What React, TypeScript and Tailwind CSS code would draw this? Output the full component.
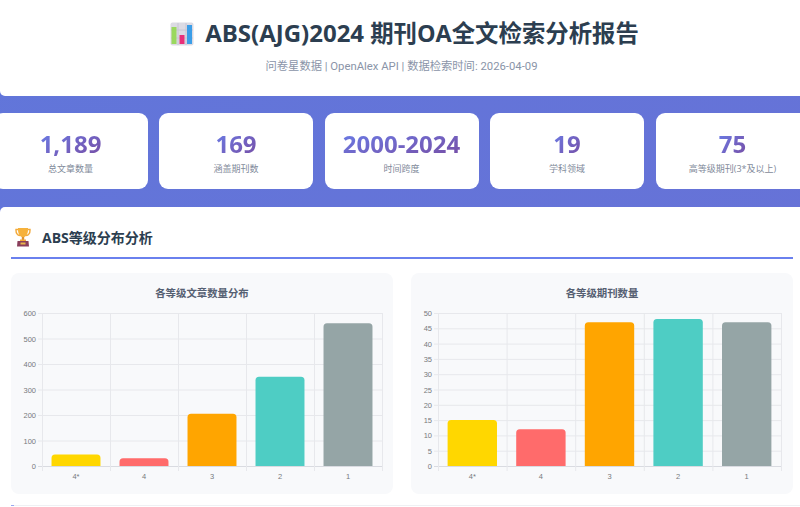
const font = "font-['Open_Sans','Noto_Sans_CJK_SC',sans-serif]";

const stats = [
  { value: '1,189', label: '总文章数量' },
  { value: '169', label: '涵盖期刊数' },
  { value: '2000-2024', label: '时间跨度' },
  { value: '19', label: '学科领域' },
  { value: '75', label: '高等级期刊(3*及以上)' },
];

const labels = ['4*', '4', '3', '2', '1'];
const colors = ['#FFD700', '#FF6B6B', '#FFA500', '#4ECDC4', '#95A5A6'];

function BarsIcon() {
  return (
    <svg width="24" height="24" viewBox="0 0 24 24">
      <rect x="0.5" y="0.5" width="23" height="23" rx="2" fill="#dcdbe4" />
      <path d="M8 1v22M16 1v22M1 8h22M1 16h22" stroke="#c8c6d4" strokeWidth="1" />
      <rect x="1.500" y="5" width="5" height="17" fill="#9ad85f" />
      <rect x="9.500" y="13" width="5" height="9" fill="#e9307a" />
      <rect x="17" y="3" width="5" height="19" fill="#3b9ee8" />
    </svg>
  );
}

function TrophyIcon() {
  return (
    <svg width="16" height="20" viewBox="0 0 16 20">
      <path d="M3 2.500H1C0.800 6 2 8 5 8.600M13 2.500h2c.2 3.500-1 5.500-4 6.100" fill="none" stroke="#f2a93b" strokeWidth="1.400" />
      <path d="M3 1h10c.3 4.500-1 8-3.700 9H6.700C4 9 2.700 5.500 3 1z" fill="#f6b23c" />
      <path d="M6.800 10h2.400v3H6.800z" fill="#e0932e" />
      <path d="M5 12.500h6v1.500H5z" fill="#f2a93b" />
      <path d="M2.500 14h11l.5 5.500H2z" fill="#8a3f5c" />
      <rect x="5.500" y="15.500" width="5" height="2" fill="#e8b64c" />
    </svg>
  );
}

function BarChart({ max, step, data, plotLeft, right, title }: { max: number; step: number; data: number[]; plotLeft: number; right: number; title: string }) {
  // plot box in svg coordinates, the svg sits at the card's left edge
  const top = 10;
  const bottom = 163;
  const w = (right - plotLeft) / 5;
  const y = (v: number) => bottom - (v / max) * (bottom - top);
  const ticks: number[] = [];
  for (let v = 0; v <= max; v += step) ticks.push(v);

  return (
    <div className="w-[382px] h-[221px] rounded-lg bg-[#f8f9fb] pt-[12px]">
      <h3 className="h-[16px] text-center text-[10.400px] leading-[16px] font-bold text-[#566072]">{title}</h3>
      <svg width="382" height="188" className="block mt-[2px]">
        {ticks.map((v) => (
          <g key={v}>
            <line x1={plotLeft - 4} x2={right} y1={y(v) + 0.5} y2={y(v) + 0.5} stroke={v === 0 ? '#d9dbe1' : '#e7e8ec'} />
            <text x={plotLeft - 6} y={y(v) + 3} textAnchor="end" fontSize="7.500" fill="#77797d" fontFamily="Liberation Sans, sans-serif">{v}</text>
          </g>
        ))}
        {[0, 1, 2, 3, 4, 5].map((i) => (
          <line key={i} x1={plotLeft + i * w + 0.5} x2={plotLeft + i * w + 0.5} y1={top} y2={bottom + 5} stroke="#e7e8ec" />
        ))}
        {data.map((v, i) => {
          const bw = w * 0.72;
          const x = plotLeft + i * w + (w - bw) / 2;
          const t = y(v);
          const r = Math.min(3.500, bottom - t);
          return (
            <path
              key={i}
              d={`M${x} ${bottom}V${t + r}Q${x} ${t} ${x + r} ${t}H${x + bw - r}Q${x + bw} ${t} ${x + bw} ${t + r}V${bottom}Z`}
              fill={colors[i]}
            />
          );
        })}
        {labels.map((l, i) => (
          <text key={l} x={plotLeft + (i + 0.5) * w} y={176} textAnchor="middle" fontSize="7.500" fill="#77797d" fontFamily="Liberation Sans, sans-serif">{l}</text>
        ))}
      </svg>
    </div>
  );
}

export default function App() {
  return (
    <div className={`w-[800px] h-[507px] overflow-hidden bg-linear-to-br from-[#6176da] to-[#6871d6] ${font}`}>
      <header className="h-[96px] bg-white rounded-bl-[5px] flex flex-col items-center pt-[18px]">
        <div className="flex items-center h-[30px] pl-[9px]">
          <div className="mt-[2px]">
            <BarsIcon />
          </div>
          <h1 className="ml-[11px] text-[23.400px] leading-[30px] font-bold text-[#2c3e50]">
            <span className="text-[24px]">ABS(AJG)2024</span> 期刊OA全文检索分析报告
          </h1>
        </div>
        <p className="mt-[11px] pl-[3px] text-[11.300px] leading-[16px] text-[#8a94a8] font-['Roboto','Noto_Sans_CJK_SC',sans-serif]">问卷星数据 | OpenAlex API | 数据检索时间: 2026-04-09</p>
      </header>

      <div className="flex gap-[11.500px] w-[816px] -ml-[6.500px] mt-[17px] h-[76px]">
        {stats.map((s) => (
          <div key={s.label} className="flex-1 bg-white rounded-[9px] flex flex-col items-center pt-[15px]">
            <div className="text-[24px] leading-[32px] font-bold bg-linear-to-br from-[#667eea] to-[#764ba2] bg-clip-text text-transparent">{s.value}</div>
            <div className="mt-[2px] text-[9px] leading-[13px] text-[#7f8a9a]">{s.label}</div>
          </div>
        ))}
      </div>

      <section className="mt-[18px] bg-white rounded-tl-[5px] h-[300px] pl-[11px] pr-[7px]">
        <div className="flex items-center h-[52px] border-b-2 border-[#6a80ee] pl-[4px] pt-[10px]">
          <TrophyIcon />
          <h2 className="ml-[11px] text-[14px] font-bold text-[#2c3e50]">ABS等级分布分析</h2>
        </div>
        <div className="flex justify-between mt-[14px] w-[782px]">
          <BarChart title="各等级文章数量分布" max={600} step={100} data={[45, 30, 205, 350, 560]} plotLeft={31} right={371} />
          <BarChart title="各等级期刊数量" max={50} step={5} data={[15, 12, 47, 48, 47]} plotLeft={27} right={370} />
        </div>
        <div className="flex mt-[11px] h-px -mr-[7px]">
          <div className="w-[3px] bg-[#9aa8f0]" />
          <div className="flex-1 bg-[#eff0f3]" />
        </div>
      </section>
    </div>
  );
}
